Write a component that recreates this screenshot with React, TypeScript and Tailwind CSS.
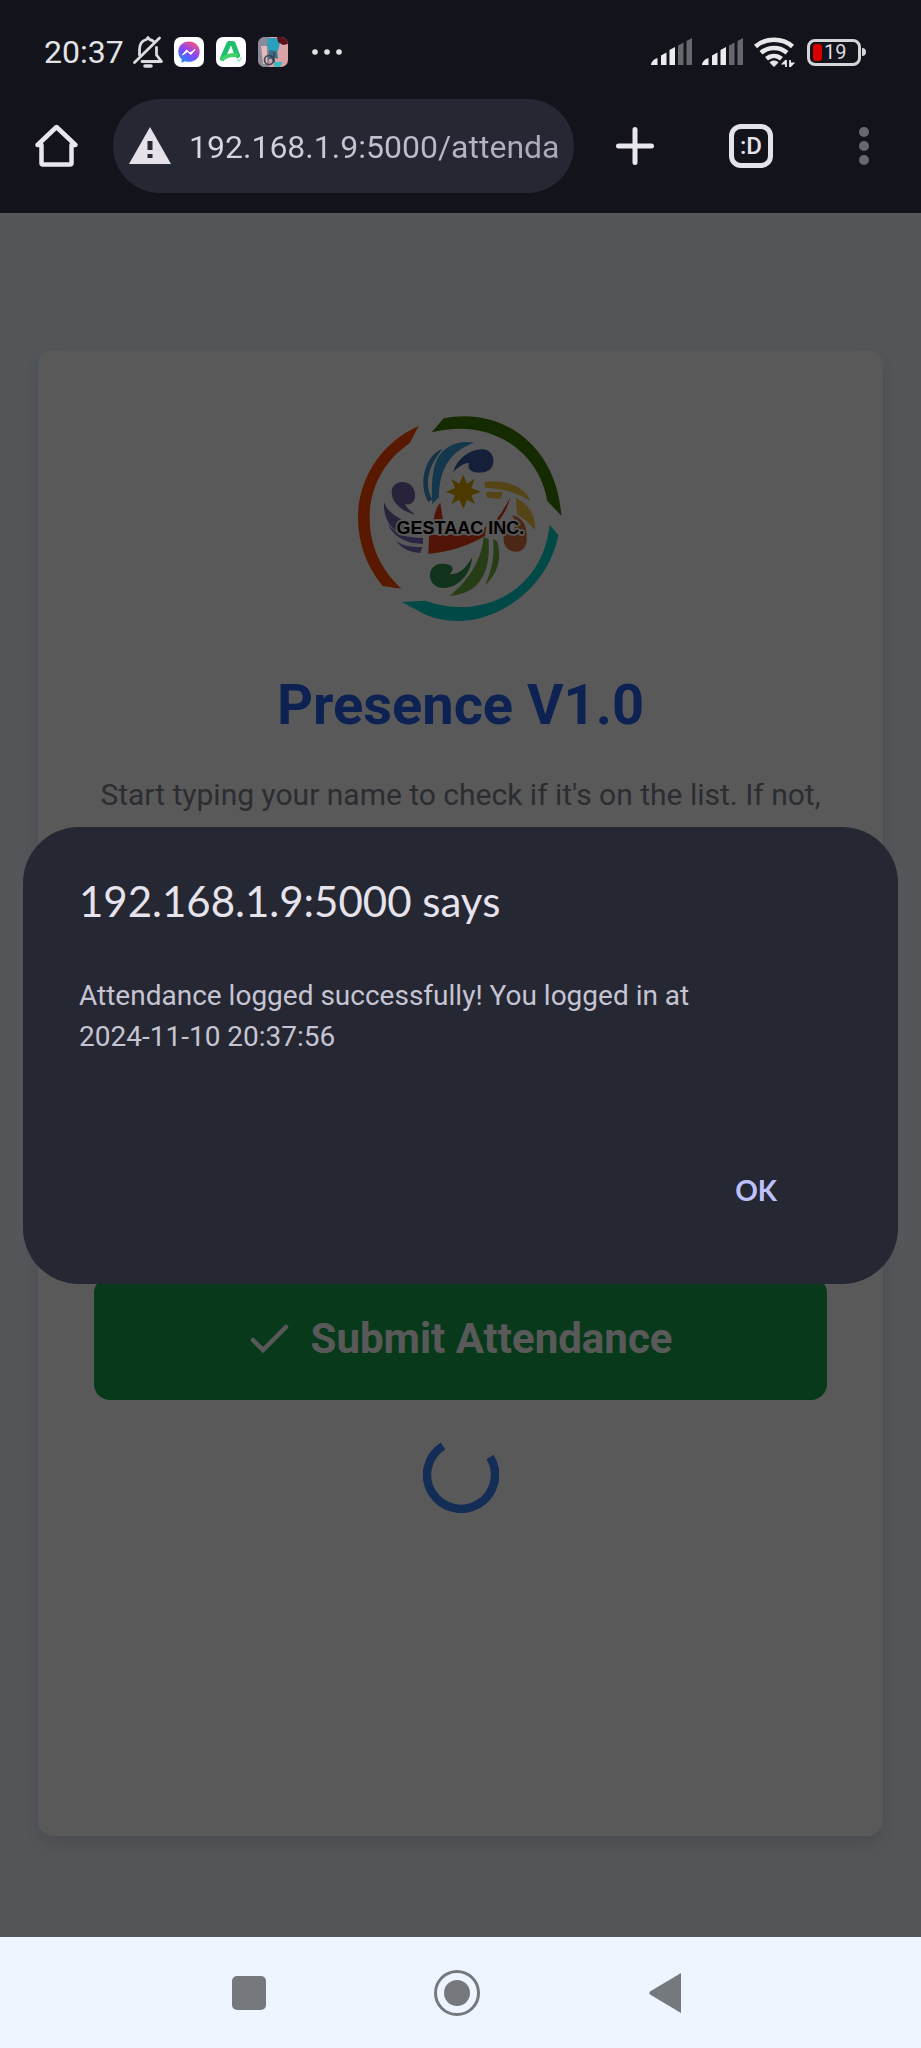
import { useState } from "react";

function StatusBar() {
  return (
    <div className="flex h-20 items-center justify-between pl-11 pr-[55px] pt-6">
      <div className="flex items-center">
        <span className="text-[32px] leading-10 text-[#e3e3e6]">20:37</span>
        <svg viewBox="0 0 32 34" className="ml-2 h-[34px] w-8" fill="none" stroke="#dcdce0" strokeWidth="2.8" strokeLinecap="round" strokeLinejoin="round">
          <path d="M2.500 27.500 27.500 3" />
          <path d="M7.500 20v-5.500C7.500 9 10.500 5.500 14.500 4.500L16 2.500l1.500 2c2 .3 3.500 1.200 4.700 2.400" />
          <path d="M24.500 12.500V20l5 6.500H10" />
          <path d="M13 31h6" strokeWidth="3.500" />
        </svg>
        <svg viewBox="0 0 30 30" className="ml-2.5 size-[30px]">
          <defs>
            <linearGradient id="bubble" x1="0.2" y1="1" x2="0.8" y2="0">
              <stop offset="0" stopColor="#1a8cff" />
              <stop offset="0.5" stopColor="#8a45f5" />
              <stop offset="1" stopColor="#ff5577" />
            </linearGradient>
          </defs>
          <rect width="30" height="30" rx="7" fill="#fff" />
          <path d="M15 4.500C8.800 4.500 4.300 9 4.300 14.700c0 3 1.200 5.600 3.300 7.500v3.600l3.300-1.600c1.300.4 2.600.6 4.100.6 6.200 0 10.700-4.400 10.700-10.100S21.200 4.500 15 4.500z" fill="url(#bubble)" />
          <path d="m8.500 18 4-5 3.500 3 5-3.500-4 5-3.500-3z" fill="#fff" stroke="#fff" strokeWidth="1" strokeLinejoin="round" />
        </svg>
        <svg viewBox="0 0 30 30" className="ml-3 size-[30px]" fill="none" strokeLinecap="round" strokeLinejoin="round">
          <rect width="30" height="30" rx="7" fill="#fff" />
          <path d="M6.500 21.500 13 6.500h4l4.500 12" stroke="#1fbf6c" strokeWidth="5" />
          <path d="M7 21.500c4-3 8-4 13-3.500" stroke="#3fd46b" strokeWidth="4" />
          <path d="m21 22 2 2 2.500-3" stroke="#a4e8c0" strokeWidth="1.500" />
        </svg>
        <svg viewBox="0 0 30 30" className="ml-3 size-[30px]">
          <rect width="30" height="30" rx="7" fill="#d9a3a8" />
          <path d="M0 7a7 7 0 0 1 7-7h4v30H7a7 7 0 0 1-7-7z" fill="#8b8a9a" />
          <path d="M3 9h6v18H5z" fill="#e3b8b8" />
          <path d="M10 1h9l3 5-2 8h-9l-2-6z" fill="#2aa0bd" />
          <path d="M19 0h4a7 7 0 0 1 7 7l-5 1-5-3z" fill="#5c0f18" />
          <path d="m11 13 8 1 1 8-5-2-5 3z" fill="#37708c" />
          <circle cx="11" cy="23" r="4.500" fill="none" stroke="#3b4654" strokeWidth="1.600" />
          <path d="m12 18 5 8M16 15v11" stroke="#3b4654" strokeWidth="1.600" />
          <path d="M16 25h9l-3 5h-6z" fill="#3dbac2" />
        </svg>
        <svg viewBox="0 0 30 6" className="ml-6 h-1.5 w-[30px]" fill="#e3e3e6">
          <circle cx="3" cy="3" r="2.800" />
          <circle cx="15" cy="3" r="2.800" />
          <circle cx="27" cy="3" r="2.800" />
        </svg>
      </div>
      <div className="flex items-center">
        <Signal />
        <Signal />
        <svg viewBox="0 0 42 32" className="h-8 w-[42px]" fill="none" stroke="#e8e8ea" strokeWidth="4.500">
          <path d="M2.500 10.500c10-9 27-9 37 0" />
          <path d="M8 16.800c7.500-6.500 18.500-6.500 26 0" />
          <path d="M13.500 22.800c4.500-3.800 10.500-3.800 15 0" />
          <path d="M17 26.500c2-2 6-2 8 0l-4 4z" fill="#e8e8ea" stroke="#e8e8ea" strokeWidth="1" />
          <path d="M33 31v-7M37 24v7M33 24.500l-3 3h3M37 30.500l3-3h-3" strokeWidth="1.800" />
        </svg>
        <div className="ml-3 flex items-center">
          <div className="flex h-[27px] w-[54px] items-center rounded-lg border-[3px] border-[#d5d5d8] pl-[3px]">
            <span className="h-[17px] w-[9px] rounded-[3px] bg-[#d90000]" />
            <span className="pl-0.5 text-xl leading-5 text-[#dcdce0]">19</span>
          </div>
          <span className="ml-px h-2 w-1 rounded-r-sm bg-[#d5d5d8]" />
        </div>
      </div>
    </div>
  );
}

function Signal() {
  return (
    <svg viewBox="0 0 42 28" className="mr-[9px] h-7 w-[42px]">
      <path d="M0 27c0-3 3-6 6.500-7v7z" fill="#ececee" />
      <path d="M10 17.500l5.500-3V27H10z" fill="#ececee" />
      <path d="M18.500 12l5.500-3V27h-5.500z" fill="#ececee" />
      <path d="M27 7.500 32.500 4.500V27H27z" fill="#66676d" />
      <path d="M35.500 3 41 0v27h-5.500z" fill="#66676d" />
    </svg>
  );
}

function Toolbar() {
  return (
    <div className="flex h-[133px] items-center pb-0.5 pl-[34px] pr-9">
      <button aria-label="Home" className="mr-[34px]">
        <svg viewBox="0 0 45 45" className="size-[45px]" fill="none" stroke="#e9e6ee" strokeWidth="4.500" strokeLinejoin="round" strokeLinecap="round">
          <path d="M3.500 22 22.500 4l19 18H37.500V40c0 1-.5 1.500-1.500 1.500H9c-1 0-1.500-.5-1.500-1.500V22z" />
        </svg>
      </button>
      <div className="flex h-[94px] min-w-0 flex-1 items-center overflow-hidden rounded-full bg-[#252733] pl-4 pr-4">
        <svg viewBox="0 0 42 37" className="mr-[18px] h-[37px] w-[42px] shrink-0">
          <path d="M21 0 42 37H0z" fill="#e6e1e9" />
          <path d="M18.500 14h5v9h-5zM18.500 27h5v4h-5z" fill="#252733" />
        </svg>
        <input
          aria-label="Address"
          readOnly
          value="192.168.1.9:5000/attenda"
          className="w-full min-w-0 bg-gradient-to-r from-[#dcdae6] to-[#a9a8b8] bg-clip-text pt-0.5 text-[32px] leading-10 text-transparent outline-none"
        />
      </div>
      <button aria-label="New tab" className="ml-[41px]">
        <svg viewBox="0 0 40 40" className="size-10" stroke="#e9e6ee" strokeWidth="5" strokeLinecap="round">
          <path d="M20 3.500v33M3.500 20h33" />
        </svg>
      </button>
      <button aria-label="Tabs" className="ml-[74px] flex size-[44px] items-center justify-center rounded-xl border-[5px] border-[#e4e2ea] text-2xl font-medium leading-6 text-[#e4e2ea]">
        :D
      </button>
      <button aria-label="Menu" className="ml-[71px] mr-px">
        <svg viewBox="0 0 40 40" className="size-10" fill="#68696e">
          <circle cx="20" cy="6" r="5" />
          <circle cx="20" cy="20" r="5" />
          <circle cx="20" cy="34" r="5" />
        </svg>
      </button>
    </div>
  );
}

function Logo() {
  return (
    <svg viewBox="0 0 705 705" className="size-[235px]" role="img" aria-label="GESTAAC INC.">
      <path d="M227 78C110 130 45 240 45 352c0 80 27 150 74 206l56 8C115 510 80 440 80 352c0-90 45-172 120-222z" fill="#ff4800" />
      <path d="M266 97 302 55C470 20 640 130 655 347l-42-44C590 160 450 50 266 97z" fill="#3d7800" />
      <path d="M620 374l26 32C610 590 410 710 250 645L176 606l70-4C420 665 600 570 620 374z" fill="#00d0c8" />
      <path d="M300 146c-50 15-78 100-44 160l12-8C240 250 260 190 300 146z" fill="#3d8fc8" />
      <path d="M394 128c-50-8-90 10-112 50-15 35-18 80-14 134l20-20c0-65 20-135 106-164z" fill="#3d9fdf" />
      <path d="M330 216c15-45 55-70 90-68 42 4 42 67 0 69-28 3-50-4-42-28-18 0-30 12-48 27z" fill="#405ba5" />
      <path d="M216 345c-25-8-70-28-70-68 0-38 56-42 68-5 8 28-6 46-28 40 6 14 18 20 30 33z" fill="#7366a8" />
      <path d="M123 306c12 32 35 42 63 58l6 40C150 400 120 360 123 306z" fill="#7366a8" />
      <path d="M134 370c24 36 60 44 106 44v18c-48 0-90-20-106-62zM160 423c22 16 44 18 78 18l-6 18c-30-2-55-12-72-36z" fill="#7b6cba" />
      <path d="m361 224 10 27 24-14-10 27 28 11-28 11 11 26-24-13-11 28-12-28-24 14 11-27-28-11 28-11-11-27 24 14z" fill="#d9a300" />
      <path d="M425 246c50-8 120 8 137 57-40-25-85-38-137-40zM427 277l53-2-8 22-39-4z" fill="#f2c43d" />
      <path d="M518 293c40 20 60 50 58 98-22-28-45-42-54-48z" fill="#f2c43d" />
      <path d="M292 308 300 360h-28c2-22 10-40 20-52zM502 292c-10 35-20 52-36 72l-12-1c20-18 30-40 48-71z" fill="#e83e14" />
      <path d="M258 404h154l18-28-4 32c-50 30-110 48-170 54z" fill="#e83e14" />
      <path d="M508 345c40 12 44 40 43 75-2 50-65 44-69 2-2-22 2-30 28-20 6-20 8-35-2-57z" fill="#d96f3d" />
      <path d="M388 472c-5 50-40 90-83 92-50 2-60-60-18-72 34-4 55 8 33 31 30 0 45-15 68-51z" fill="#338f4d" />
      <path d="M422 412c-5 60-40 125-102 176 65-5 125-40 117-170z" fill="#70b040" />
      <path d="M450 416c5 60-3 90-24 140 44-40 50-90 36-132z" fill="#70b040" />
      <text x="352" y="401" textAnchor="middle" fontSize="54" fontFamily="Liberation Sans, sans-serif" fontWeight="700" stroke="#fff" strokeWidth="10" strokeLinejoin="round" paintOrder="stroke" fill="#000">
        GESTAAC INC.
      </text>
    </svg>
  );
}

function AttendanceCard() {
  return (
    <section className="flex flex-1 flex-col items-center rounded-2xl bg-white px-14 pb-14 pt-[50px] shadow-[0_8px_18px_rgba(0,0,0,0.12)]">
      <Logo />
      <h1 className="mt-9 text-center text-[56px] font-bold leading-[68px] text-[#2563eb]">Presence V1.0</h1>
      <p className="mt-8 text-center text-[30px] leading-[48px] text-[#7c828d]">
        Start typing your name to check if it's on the list. If not,
      </p>
      <button className="mt-[458px] flex h-[123px] w-full items-center justify-center gap-5 rounded-2xl bg-[#16a34a] text-[42px] font-bold text-white">
        <svg viewBox="0 0 42 32" className="h-8 w-[42px]" fill="none" stroke="currentColor" strokeWidth="4.500" strokeLinecap="round">
          <path d="m4 17 10 10L37 4" />
        </svg>
        Submit Attendance
      </button>
      <svg viewBox="0 0 76 76" className="mt-[37px] size-[76px]" fill="none" stroke="#3b82f6" strokeWidth="8.500">
        <path d="M20 9A34 34 0 1 0 67 20" />
      </svg>
    </section>
  );
}

function Dialog({ onClose }: { onClose: () => void }) {
  return (
    <div className="absolute inset-0 flex items-center bg-black/65 px-[23px] pb-10">
      <div role="alertdialog" aria-labelledby="dialog-title" aria-describedby="dialog-body" className="flex w-full flex-col rounded-[56px] bg-[#252733] px-14 pb-[62px] pt-[46px]">
        <h2 id="dialog-title" className="font-['Lato',sans-serif] text-[42px] leading-[56px] text-[#e6e3ec]">
          192.168.1.9:5000 says
        </h2>
        <p id="dialog-body" className="mt-[46px] max-w-[660px] text-[28px] leading-[41px] text-[#c6c4d2]">
          Attendance logged successfully! You logged in at 2024-11-10 20:37:56
        </p>
        <button onClick={onClose} className="mr-[45px] mt-[101px] self-end px-5 py-4 font-['Lato',sans-serif] text-[28px] font-bold leading-8 text-[#bfc0fa]">
          OK
        </button>
      </div>
    </div>
  );
}

export default function App() {
  const [open, setOpen] = useState(true);
  return (
    <div className="flex min-h-screen flex-col bg-[#12131b] font-['Roboto',sans-serif]">
      <header>
        <StatusBar />
        <Toolbar />
      </header>
      <main className="relative flex flex-1 flex-col bg-[#eff6ff] px-[38px] pb-[101px] pt-[137px]">
        <AttendanceCard />
        {open && <Dialog onClose={() => setOpen(false)} />}
      </main>
      <nav className="flex h-[111px] items-center justify-center gap-40 bg-[#eef5ff] pr-2">
        <button aria-label="Recent apps">
          <svg viewBox="0 0 48 48" className="size-12" fill="#75787c">
            <rect x="7" y="7" width="34" height="34" rx="5" />
          </svg>
        </button>
        <button aria-label="Home screen">
          <svg viewBox="0 0 48 48" className="size-12">
            <circle cx="24" cy="24" r="21.500" fill="none" stroke="#75787c" strokeWidth="3" />
            <circle cx="24" cy="24" r="13" fill="#75787c" />
          </svg>
        </button>
        <button aria-label="Back">
          <svg viewBox="0 0 48 48" className="size-12" fill="#75787c">
            <path d="M40 4v40L9 25.500q-1.500-1.500 0-3z" />
          </svg>
        </button>
      </nav>
    </div>
  );
}
